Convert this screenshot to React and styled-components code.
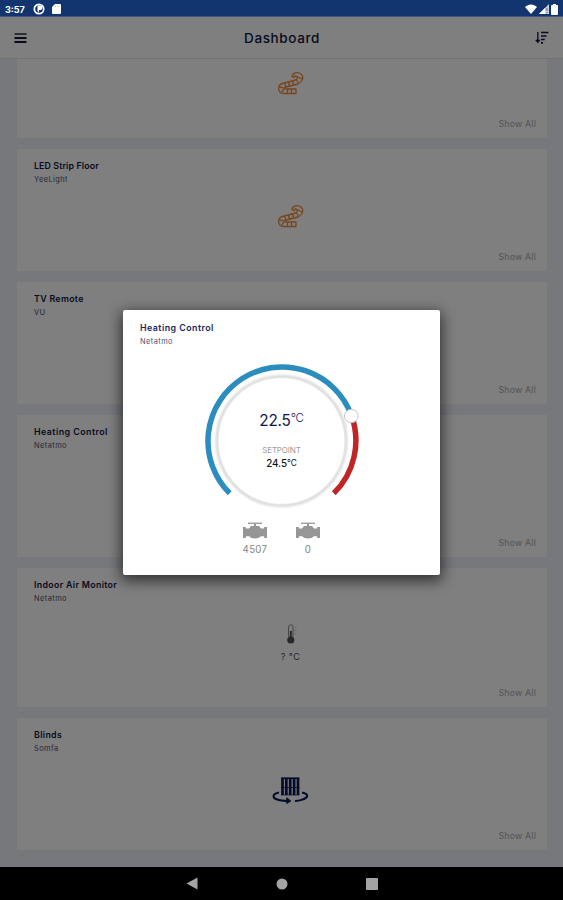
import styled, { createGlobalStyle } from "styled-components";

const GlobalStyle = createGlobalStyle`
  * {
    box-sizing: border-box;
  }
  body {
    margin: 0;
    font-family: Inter, "Open Sans", sans-serif;
    color: #10143c;
  }
`;

const Screen = styled.div`
  position: relative;
  display: flex;
  flex-direction: column;
  width: 563px;
  height: 900px;
  overflow: hidden;
  background: #ecf0f8;
`;

const StatusBar = styled.div`
  display: flex;
  flex: none;
  align-items: center;
  justify-content: space-between;
  height: 17px;
  padding: 2px 5px 0 5px;
  background: #12346f;
  border-bottom: 1px solid #3c5780;
  color: #fff;
`;

const Clock = styled.span`
  width: 21px;
  font-size: 9px;
  font-weight: 700;
  letter-spacing: 0;
`;

const StatusGroup = styled.div`
  display: flex;
  align-items: center;
  gap: ${({ $gap }) => $gap}px;
`;

const Header = styled.header`
  display: flex;
  flex: none;
  align-items: center;
  justify-content: space-between;
  height: 42px;
  padding: 0 14px;
  background: #fff;
  border-bottom: 1px solid #e6e6ea;
`;

const PageTitle = styled.h1`
  margin: 0;
  padding-left: 2px;
  font-size: 13.5px;
  font-weight: 500;
  letter-spacing: 0.6px;
`;

const CardList = styled.main`
  display: flex;
  flex: 1;
  flex-direction: column;
  justify-content: flex-end;
  gap: 11px;
  min-height: 0;
  overflow: hidden;
  padding: 0 16px 17px 17px;
`;

const Card = styled.section`
  display: flex;
  flex: none;
  flex-direction: column;
  height: ${({ $height }) => $height}px;
  padding: 10px 11px 8px 17px;
  background: #fff;
`;

const CardTitle = styled.div`
  height: 14px;
  font-size: 8.8px;
  font-weight: 600;
  line-height: 14px;
  letter-spacing: ${({ $spacing = 0.33 }) => $spacing}px;
  color: ${({ $color = "#10143c" }) => $color};
`;

const CardVendor = styled.div`
  height: 13px;
  font-size: 7.4px;
  line-height: 13px;
  letter-spacing: 0.45px;
  color: #4a4f70;
`;

const CardBody = styled.div`
  display: flex;
  flex: 1;
  flex-direction: column;
  align-items: center;
  padding: ${({ $top }) => $top}px 0 0 11px;
`;

const Reading = styled.div`
  margin-top: 5px;
  font-size: 9.2px;
  line-height: 14px;
  letter-spacing: 0.4px;
  color: #55565e;
`;

const ShowAll = styled.div`
  align-self: flex-end;
  font-size: 8.8px;
  line-height: 13px;
  letter-spacing: 0.2px;
  color: #a6a6a8;
`;

const NavBar = styled.nav`
  display: flex;
  flex: none;
  align-items: center;
  justify-content: center;
  gap: 78px;
  height: 33px;
  background: #000;
`;

// Covers everything between the status bar and the system navigation
const Overlay = styled.div`
  position: absolute;
  inset: 17px 0 33px;
  display: flex;
  align-items: center;
  justify-content: center;
  background: rgba(0, 0, 0, 0.5);
`;

const Dialog = styled.div`
  display: flex;
  flex-direction: column;
  width: 317px;
  height: 265px;
  padding: 11px 17px;
  border-radius: 2px;
  background: #fff;
  box-shadow: 0 4px 14px 2px rgba(0, 0, 0, 0.6);
`;

const Dial = styled.div`
  display: grid;
  align-self: center;
  width: 156px;
  height: 150px;
  margin-top: 15px;

  > * {
    grid-area: 1 / 1;
  }
`;

const DialText = styled.div`
  display: flex;
  flex-direction: column;
  align-items: center;
  padding-top: 48px;
`;

const Current = styled.div`
  display: flex;
  font-size: 15.3px;
  line-height: 20px;
  letter-spacing: -0.2px;
  color: #11144f;
`;

const CurrentUnit = styled.span`
  font-size: 11.5px;
  font-weight: 300;
  line-height: 15px;
`;

const SetpointLabel = styled.div`
  margin-top: 13px;
  font-size: 8px;
  font-weight: 300;
  line-height: 12px;
  letter-spacing: -0.1px;
  color: #77777a;
`;

const Setpoint = styled.div`
  display: flex;
  margin-top: 1px;
  font-size: 9.8px;
  font-weight: 500;
  line-height: 14px;
  color: #111;
`;

const SetpointUnit = styled.span`
  font-size: 8.4px;
  font-weight: 400;
  line-height: 12px;
`;

const ValveRow = styled.div`
  display: flex;
  justify-content: center;
  gap: 27px;
  margin-top: 9px;
`;

const Valve = styled.div`
  display: flex;
  flex-direction: column;
  align-items: center;
  width: 26px;
`;

const ValveValue = styled.span`
  margin-top: 4px;
  font-size: 9.7px;
  line-height: 14px;
  letter-spacing: 0.3px;
  color: #868686;
`;

const AppBadgeIcon = () => (
  <svg width="12" height="12" viewBox="0 0 12 12">
    <circle cx="6" cy="6" r="4.7" fill="#12346f" stroke="#fff" strokeWidth="1.7" />
    <path d="M4.500 2.500h2.700a2 2 0 0 1 0 4.500H6v2.500L4.500 8z" fill="#fff" />
  </svg>
);

const SdCardIcon = () => (
  <svg width="9" height="10" viewBox="0 0 9 10">
    <path d="M3 0h5q1 0 1 1v8q0 1-1 1H1q-1 0-1-1V3z" fill="#fff" />
    <path d="M3.5 1.5v1.500M5.3 1.5v1.500M7 1.5v1.500" stroke="#a9b5cc" strokeWidth=".6" />
  </svg>
);

const WifiIcon = () => (
  <svg width="12" height="10" viewBox="0 0 12 10">
    <path d="M0 3C3.4-.4 8.6-.4 12 3L6 10z" fill="#fff" />
  </svg>
);

const SignalIcon = () => (
  <svg width="10" height="10" viewBox="0 0 10 10">
    <path d="M10 0v10H0z" fill="#c6cedd" />
    <path d="M6 4v6H0z" fill="#fff" />
    <path d="M8 4v3M8 8v1.2" stroke="#5a6f99" strokeWidth="1" />
  </svg>
);

const BatteryIcon = () => (
  <svg width="7" height="11" viewBox="0 0 7 11">
    <path d="M2 0h3v1h1.2q.8 0 .8.8V10q0 1-1 1H1q-1 0-1-1V1.8Q0 1 .8 1H2z" fill="#fff" />
  </svg>
);

const MenuIcon = () => (
  <svg width="13" height="12" viewBox="0 0 13 12">
    <path d="M.5 2h12" stroke="#5b5b68" strokeWidth="2" />
    <path d="M.5 6h12M.5 10h12" stroke="#10143c" strokeWidth="1.8" />
  </svg>
);

const SortIcon = () => (
  <svg width="14" height="13" viewBox="0 0 14 13">
    <path d="M2.8 1v9" stroke="#3a3d58" strokeWidth="1.6" />
    <path d="M.6 9h4.400L2.800 12z" fill="#10143c" stroke="#10143c" strokeWidth=".6" />
    <path d="M6 1.5h7.5M6 5h5.5M6 8.5h3.7M6 11.8h2" stroke="#10143c" strokeWidth="1.7" />
  </svg>
);

const LedStripIcon = () => (
  <svg width="26" height="24" viewBox="0 0 26 24" fill="none">
    <g stroke="#ee8a38" strokeWidth="1.3" strokeLinejoin="round">
      <path d="M14 5.5C14.500 1.500 20 .500 23 3c3.500 3 1.500 8-3 10L8 16c-2.500 .600-2 2 0 2h10v4.500H5.500C-.500 22.500-1 14 4.500 12.500L16 9.500c4-1 4.500-4.500 1.500-4.500-1.500 0-1.500 1.500-1.500 1.500z" />
      <path d="M6.500 12.500l1.500 3.500M10.500 11l1 4M14.500 10l1.200 3.800M18.500 9l2 3M20 6l4 2M1.500 16l4 .800M3.500 21l2.500-3M9.500 18v4M13.500 18v4" />
    </g>
  </svg>
);

const ThermometerIcon = () => (
  <svg width="14" height="22" viewBox="0 0 14 22">
    <path d="M4.600 14V4a2.200 2.200 0 0 1 4.400 0v10" fill="none" stroke="#8a8a8e" strokeWidth="1" />
    <path d="M6.800 8v8" stroke="#4a4a52" strokeWidth="1.900" />
    <circle cx="6.800" cy="17" r="3.600" fill="#505058" />
    <path d="M10.500 4.500h2M10.500 7.500h2M10.500 10.500h2" stroke="#c2c2c4" strokeWidth=".8" />
  </svg>
);

const BlindsIcon = () => (
  <svg width="37" height="27" viewBox="0 0 37 27" fill="none" stroke="#0b1552">
    <path d="M9 1.200h18.500" strokeWidth="1.600" />
    <path d="M10.500 2v16M14.300 2v16M18.200 2v16M22.100 2v16M26 2v16" strokeWidth="2.700" />
    <path d="M9 10.500h18.500M9 18h18.500" strokeWidth=".7" />
    <path d="M7 15.500C.5 16.800 0 20.500 4.500 22.300c3 1.200 7 1.700 12 1.700" strokeWidth="2" />
    <path d="M14.800 20.800l4 3.200-4 2.500z" fill="#0b1552" />
    <path d="M30 15.500c7 1.500 7 5-.5 7.400-2 .6-4 .9-6.500 1.100" strokeWidth="2" />
  </svg>
);

const ValveIcon = () => (
  <svg width="24" height="17" viewBox="0 0 24 17" fill="#969696">
    <path d="M5 .6h14v1.300H5z" />
    <path d="M11 1.500h2v3h-2z" />
    <path d="M8 4h8l2 2.500h3.200V5H24v11h-2.800v-1.800H18Q16 16.500 12 16.500T6 14.200H2.800V16H0V5h2.800v1.500H6z" />
  </svg>
);

const DialGraphic = () => (
  <svg width="156" height="150" viewBox="0 0 156 150" fill="none">
    <defs>
      <filter id="ringShadow" x="-10%" y="-10%" width="120%" height="120%">
        <feGaussianBlur stdDeviation="1.2" />
      </filter>
    </defs>
    <circle cx="77.500" cy="78" r="64.500" stroke="#d9d9d9" strokeWidth="3" filter="url(#ringShadow)" />
    <circle cx="77.500" cy="78" r="62.800" fill="#fff" />
    <path d="M25.700 130.300A74 74 0 1 1 147.300 52" stroke="#2b8dbf" strokeWidth="5.500" />
    <path d="M147.300 52A74 74 0 0 1 129.800 130.300" stroke="#c02626" strokeWidth="5.500" />
    <circle cx="147.300" cy="53" r="6.800" fill="#fff" stroke="#b9bcbe" strokeWidth=".8" />
  </svg>
);

// The first card is scrolled up so far that its heading is out of view
const cards = [
  { id: "strip", height: 122, top: 18, icon: <LedStripIcon /> },
  {
    id: "strip-floor",
    title: "LED Strip Floor",
    vendor: "YeeLight",
    spacing: 0.12,
    height: 122,
    top: 18,
    icon: <LedStripIcon />,
  },
  { id: "tv", title: "TV Remote", vendor: "VU", height: 122, top: 17 },
  { id: "heating", title: "Heating Control", vendor: "Netatmo", spacing: 0.48, height: 142, top: 17 },
  {
    id: "air",
    title: "Indoor Air Monitor",
    vendor: "Netatmo",
    height: 139,
    top: 18,
    icon: <ThermometerIcon />,
    reading: "? °C",
  },
  { id: "blinds", title: "Blinds", vendor: "Somfa", height: 132, top: 22, icon: <BlindsIcon /> },
];

const valves = [4507, 0];

const App = () => {
  return (
    <>
      <GlobalStyle />
      <Screen>
        <StatusBar>
          <StatusGroup $gap={7}>
            <Clock>3:57</Clock>
            <StatusGroup $gap={7}>
              <AppBadgeIcon />
              <SdCardIcon />
            </StatusGroup>
          </StatusGroup>
          <StatusGroup $gap={2}>
            <WifiIcon />
            <SignalIcon />
            <BatteryIcon />
          </StatusGroup>
        </StatusBar>

        <Header>
          <MenuIcon />
          <PageTitle>Dashboard</PageTitle>
          <SortIcon />
        </Header>

        <CardList>
          {cards.map((card) => (
            <Card key={card.id} $height={card.height}>
              <CardTitle $spacing={card.spacing}>{card.title}</CardTitle>
              <CardVendor>{card.vendor}</CardVendor>
              <CardBody $top={card.top}>
                {card.icon}
                {card.reading && <Reading>{card.reading}</Reading>}
              </CardBody>
              <ShowAll>Show All</ShowAll>
            </Card>
          ))}
        </CardList>

        <NavBar>
          <svg width="12" height="13" viewBox="0 0 12 13">
            <path d="M11.500.5v12L.5 6.500z" fill="#a3a3a3" />
          </svg>
          <svg width="12" height="12" viewBox="0 0 12 12">
            <circle cx="6" cy="6" r="5.500" fill="#a3a3a3" />
          </svg>
          <svg width="12" height="12" viewBox="0 0 12 12">
            <rect width="12" height="12" rx="1" fill="#a3a3a3" />
          </svg>
        </NavBar>

        <Overlay>
          <Dialog>
            <CardTitle $color="#20245c" $spacing={0.48}>
              Heating Control
            </CardTitle>
            <CardVendor>Netatmo</CardVendor>
            <Dial>
              <DialGraphic />
              <DialText>
                <Current>
                  22.5<CurrentUnit>°C</CurrentUnit>
                </Current>
                <SetpointLabel>SETPOINT</SetpointLabel>
                <Setpoint>
                  24.5<SetpointUnit>°C</SetpointUnit>
                </Setpoint>
              </DialText>
            </Dial>
            <ValveRow>
              {valves.map((value) => (
                <Valve key={value}>
                  <ValveIcon />
                  <ValveValue>{value}</ValveValue>
                </Valve>
              ))}
            </ValveRow>
          </Dialog>
        </Overlay>
      </Screen>
    </>
  );
};

export default App;
